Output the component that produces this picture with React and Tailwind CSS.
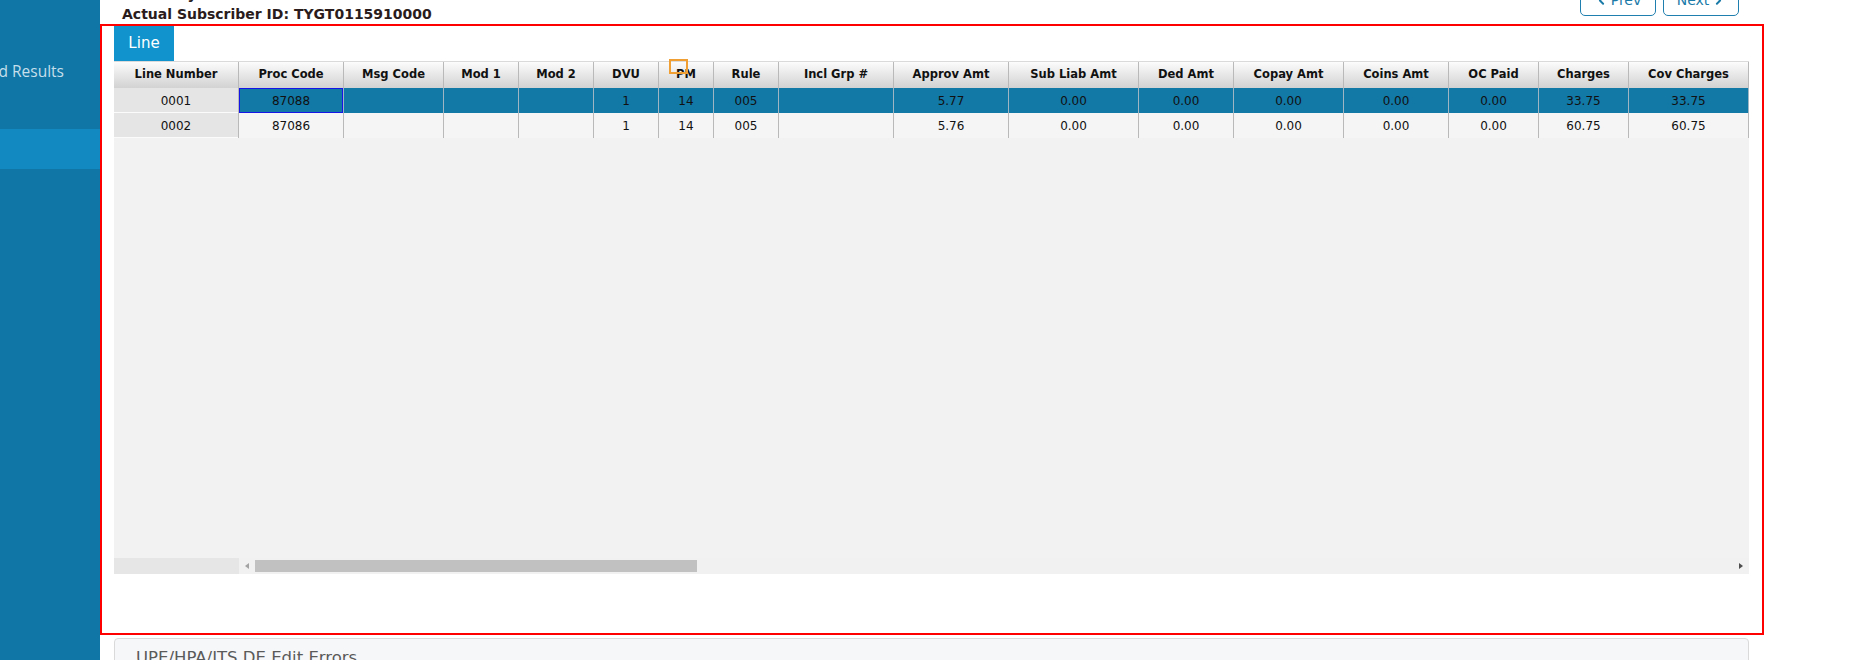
import { ChevronLeft, ChevronRight } from 'lucide-react';

const COLUMNS = [
  { label: 'Line Number', w: 'w-[125px]' },
  { label: 'Proc Code', w: 'w-[105px]' },
  { label: 'Msg Code', w: 'w-[100px]' },
  { label: 'Mod 1', w: 'w-[75px]' },
  { label: 'Mod 2', w: 'w-[75px]' },
  { label: 'DVU', w: 'w-[65px]' },
  { label: 'PM', w: 'w-[55px]' },
  { label: 'Rule', w: 'w-[65px]' },
  { label: 'Incl Grp #', w: 'w-[115px]' },
  { label: 'Approv Amt', w: 'w-[115px]' },
  { label: 'Sub Liab Amt', w: 'w-[130px]' },
  { label: 'Ded Amt', w: 'w-[95px]' },
  { label: 'Copay Amt', w: 'w-[110px]' },
  { label: 'Coins Amt', w: 'w-[105px]' },
  { label: 'OC Paid', w: 'w-[90px]' },
  { label: 'Charges', w: 'w-[90px]' },
  { label: 'Cov Charges', w: 'w-[120px]' },
];

const LINES = [
  ['0001', '87088', '', '', '', '1', '14', '005', '', '5.77', '0.00', '0.00', '0.00', '0.00', '0.00', '33.75', '33.75'],
  ['0002', '87086', '', '', '', '1', '14', '005', '', '5.76', '0.00', '0.00', '0.00', '0.00', '0.00', '60.75', '60.75'],
];

export default function App() {
  return (
    <div className="flex h-[660px] w-[1863px] overflow-hidden bg-white font-['DejaVu_Sans',sans-serif]">
      <Sidebar />

      <main className="flex flex-col">
        {/* Cabecera del claim */}
        <div className="-mt-[14px] flex h-[38px] w-[1664px] shrink-0 justify-between pl-[22px] pr-[25px]">
          <div className="text-[14px] font-bold leading-[17px] text-[#2a1c1c]">
            <div className="mb-[3px]">Summary</div>
            <div>Actual Subscriber ID: TYGT0115910000</div>
          </div>
          <div className="-mt-[2px] flex gap-[7px] self-start">
            <NavButton>
              <ChevronLeft className="h-[13px] w-[13px]" strokeWidth={3.5} />
              Prev
            </NavButton>
            <NavButton>
              Next
              <ChevronRight className="h-[13px] w-[13px]" strokeWidth={3.5} />
            </NavButton>
          </div>
        </div>

        <section className="relative h-[611px] w-[1664px] shrink-0 border-2 border-[#ff0000] pl-[12px]">
          <div className="flex h-[35px] w-[60px] items-center justify-center bg-[#1194cd] text-[15px] text-white">
            Line
          </div>

          <LinesGrid />

          {/* marcador de celda */}
          <div className="absolute left-[567px] top-[33px] h-[15px] w-[19px] border-2 border-[#f0a032]" />
        </section>

        <div className="ml-[14px] mt-[3px] h-[40px] w-[1635px] shrink-0 rounded-t-[4px] border border-[#dadada] bg-[#f6f7f9] pl-[21px] pt-[9px] text-[16.5px] leading-[20px] text-[#5a5a5a]">
          UPE/HPA/ITS DE Edit Errors
        </div>
      </main>
    </div>
  );
}

function Sidebar() {
  return (
    <aside className="flex w-[100px] shrink-0 flex-col bg-[#0f76a6] font-['Open_Sans',sans-serif]">
      <div className="mt-[59px] flex h-[24px] w-[64px] justify-end overflow-hidden whitespace-nowrap text-[15.5px] leading-[24px] text-[#c6dfeb]">
        Claim Search and Results
      </div>
      <div className="mt-[46px] h-[40px] bg-[#1289c1]" />
    </aside>
  );
}

function NavButton({ children }) {
  return (
    <button className="flex h-[32px] w-[76px] items-center justify-center gap-[3px] rounded-[5px] border border-[#1f7fae] bg-white text-[14px] text-[#1a7aa8]">
      {children}
    </button>
  );
}

function LinesGrid() {
  return (
    <div className="w-[1635px] text-[#111]">
      <div className="flex h-[27px] border-t border-[#dadada] bg-linear-to-b from-[#fcfcfc] to-[#d2d2d2]">
        {COLUMNS.map(col => (
          <div
            key={col.label}
            className={`${col.w} flex items-center justify-center border-r border-[#b9b9b9] text-[11.5px] font-bold`}
          >
            {col.label}
          </div>
        ))}
      </div>

      {LINES.map((line, r) => {
        const selected = r === 0;
        return (
          <div key={line[0]} className={`flex h-[25px] ${selected ? 'bg-[#1278a6]' : 'bg-[#f5f5f5]'}`}>
            {line.map((value, c) => {
              let cls = selected ? 'border-[#9fb5c4]' : 'border-[#b9b9b9]';
              if (c === 0) cls = 'border-[#b9b9b9] bg-[#e5e5e5] shadow-[inset_0_-1px_0_#fbfbfb]';
              if (selected && c === 1) cls += ' shadow-[inset_0_0_0_1px_#1515e6]';
              return (
                <div
                  key={c}
                  className={`${COLUMNS[c].w} ${cls} flex items-center justify-center border-r text-[12px]`}
                >
                  {value}
                </div>
              );
            })}
          </div>
        );
      })}

      <div className="h-[420px] bg-[#f2f2f2]" />

      {/* barra de desplazamiento horizontal */}
      <div className="flex h-[16px]">
        <div className="w-[125px] bg-[#e6e6e6]" />
        <div className="flex flex-1 items-center bg-[#f1f1f1] pl-[6px] pr-[6px]">
          <span className="h-0 w-0 border-y-[3.5px] border-r-[4px] border-y-transparent border-r-[#a3a3a3]" />
          <div className="ml-[6px] h-[12px] w-[442px] bg-[#c1c1c1]" />
          <div className="flex-1" />
          <span className="h-0 w-0 border-y-[3.5px] border-l-[4px] border-y-transparent border-l-[#4d4d4d]" />
        </div>
      </div>
    </div>
  );
}
